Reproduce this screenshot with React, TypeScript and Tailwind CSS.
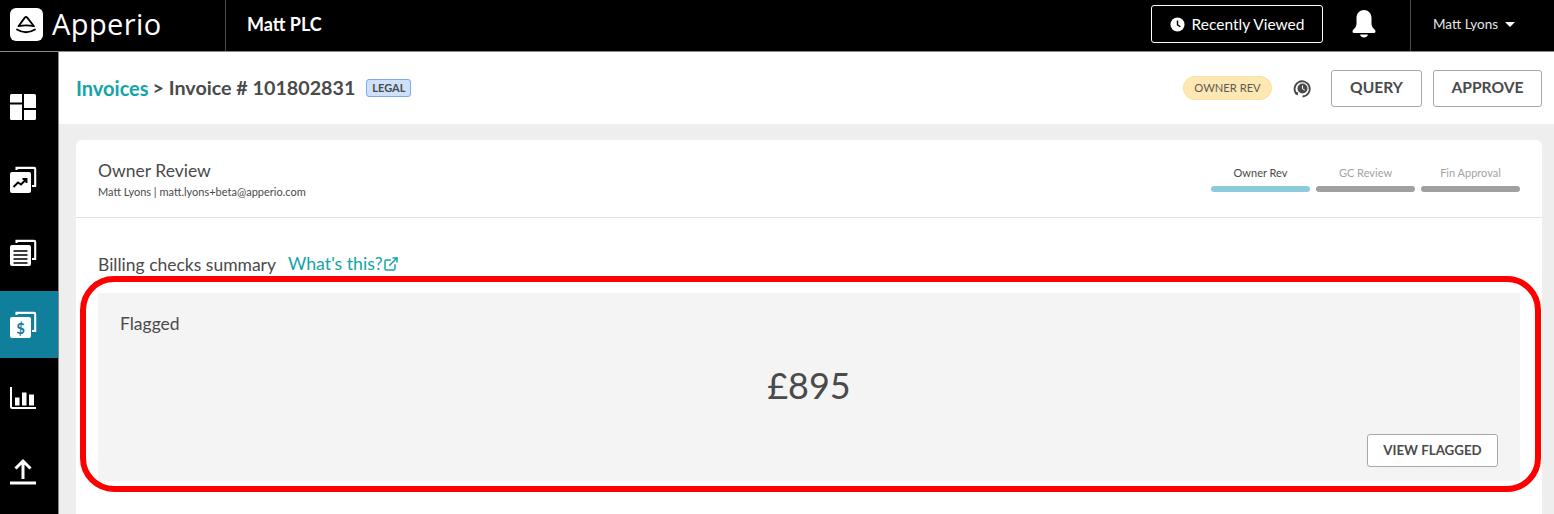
import {ExternalLink} from "lucide-react";

function AppLogo() {
    return (
        <div className="w-[33px] h-[33px] rounded-[6px] bg-white flex items-center justify-center">
            <svg width="33" height="33" viewBox="0 0 33 33" fill="none" stroke="#000" strokeWidth="1.8" strokeLinecap="round" strokeLinejoin="round">
                <path d="M8.5 18.2L14.8 9.6Q16 8.4 17.2 9.6L24 18.2Q16 16.4 8.5 18.2Z"/>
                <path d="M7 21.5Q16 27 25 21.5"/>
            </svg>
        </div>
    );
}

function ClockIcon({className}: { className?: string }) {
    return (
        <svg className={className} viewBox="0 0 16 16">
            <circle cx="8" cy="8" r="7.5" fill="currentColor"/>
            <path d="M8 3.8V8.3L11 10.4" fill="none" stroke="#000" strokeWidth="1.5"/>
        </svg>
    );
}

function BellIcon() {
    return (
        <svg width="24" height="28" viewBox="0 0 24 28" fill="#fff">
            <path d="M12 0C8 0 4.5 3 4.5 8V14C4.5 17 2.5 18 1 20C0 21.5 0.5 23 2 23H22C23.5 23 24 21.5 23 20C21.5 18 19.5 17 19.5 14V8C19.5 3 16 0 12 0Z"/>
            <path d="M8 24.5H16C15.5 26.5 14 27.5 12 27.5C10 27.5 8.5 26.5 8 24.5Z"/>
        </svg>
    );
}

function DashboardIcon() {
    return (
        <svg width="28" height="28" viewBox="0 0 28 28" fill="#fff">
            <path d="M1 2.5Q1 1 2.5 1H13V9.5H1Z"/>
            <path d="M1 11.5H13V27H2.5Q1 27 1 25.5Z"/>
            <path d="M15 1H25.5Q27 1 27 2.5V15H15Z"/>
            <path d="M15 17H27V25.5Q27 27 25.5 27H15Z"/>
        </svg>
    );
}

function StackedIcon({children}: { children: React.ReactNode }) {
    return (
        <svg width="28" height="28" viewBox="0 0 28 28">
            <path d="M7.5 4V1.9H25Q26.2 1.9 26.2 3V20H23" fill="none" stroke="#fff" strokeWidth="2.1"/>
            <rect x="1" y="6" width="21" height="21" rx="2" fill="#fff"/>
            {children}
        </svg>
    );
}

function ChartIcon() {
    return (
        <svg width="28" height="24" viewBox="0 0 28 24" fill="#fff">
            <path d="M2 1V20.5Q2 22 3.5 22H27" fill="none" stroke="#fff" strokeWidth="2"/>
            <rect x="6" y="11.5" width="4.5" height="8"/>
            <rect x="13" y="6.5" width="4.5" height="13"/>
            <rect x="20" y="8.5" width="5" height="11"/>
        </svg>
    );
}

function HistoryIcon() {
    return (
        <svg width="19" height="19" viewBox="0 0 19 19" fill="none">
            <path d="M4 15.5A7.6 7.6 0 1 1 9.5 17.5" stroke="#4a4a4a" strokeWidth="1.8"/>
            <path d="M1.8 13.5L4.8 13L5 16.5Z" fill="#4a4a4a"/>
            <circle cx="9.5" cy="9.5" r="5" fill="#4a4a4a"/>
            <path d="M9.5 6.5V9.8L11.8 11" stroke="#fff" strokeWidth="1"/>
        </svg>
    );
}

function NavItem({children, className}: { children: React.ReactNode; className?: string }) {
    return (
        <div className={`h-[73px] flex items-center pl-[9px] ${className ?? ""}`}>
            {children}
        </div>
    );
}

function Step({label, active}: { label: string; active?: boolean }) {
    return (
        <div className="w-[99px] flex flex-col items-center">
            <span className={active ? "text-[11px] leading-[14px] text-[#4a4a4a]" : "text-[11px] leading-[14px] text-[#a3a3a3]"}>{label}</span>
            <div className={active ? "mt-[6px] w-full h-[6px] rounded-full bg-[#8ccbda]" : "mt-[6px] w-full h-[6px] rounded-full bg-[#a0a0a0]"}/>
        </div>
    );
}

export default function App() {
    return (
        <div className="relative w-[1554px] h-[514px] overflow-hidden bg-black font-['Lato','Open_Sans',sans-serif] text-[#4a4a4a]">
            <header className="h-[52px] flex border-b border-[#8a8a8a] bg-black text-white">
                <div className="w-[226px] flex items-center pl-[10px] pb-[3px] gap-[9px] border-r border-[#4a4a4a]">
                    <AppLogo/>
                    <span className="text-[29px] leading-none font-normal tracking-[0.4px] font-['Open_Sans',sans-serif] pb-[2px]">Apperio</span>
                </div>
                <div className="flex-1 flex items-center pl-[21px] pb-[3px] text-[18px] font-bold">Matt PLC</div>
                <div className="h-[38px] w-[172px] mt-[5px] pt-[1px] flex items-center justify-center gap-[7px] border border-white rounded-[3px] text-[15.5px] mr-[27px]">
                    <ClockIcon className="w-[15px] h-[15px] text-white"/>
                    <span>Recently Viewed</span>
                </div>
                <div className="w-[60px] flex items-center pl-[2px] pb-[3px]">
                    <BellIcon/>
                </div>
                <div className="w-[144px] flex items-center pl-[22px] pb-[2px] gap-[7px] border-l border-[#4a4a4a] text-[13.5px] text-[#e6e6e6]">
                    <span>Matt Lyons</span>
                    <span className="w-0 h-0 border-x-[5px] border-x-transparent border-t-[5px] border-t-white"/>
                </div>
            </header>
            <div className="flex h-[462px]">
                <nav className="w-[59px] shrink-0 border-r border-[#8a8a8a] pt-[18px] flex flex-col">
                    <NavItem><DashboardIcon/></NavItem>
                    <NavItem>
                        <StackedIcon>
                            <path d="M4.5 21L9 16.5L12 18.5L17 13.5M13.5 13H17.5V17" fill="none" stroke="#000" strokeWidth="1.9"/>
                        </StackedIcon>
                    </NavItem>
                    <NavItem>
                        <StackedIcon>
                            <path d="M4.5 12H18.5M4.5 16H18.5M4.5 20H18.5M4.5 24H18.5" stroke="#000" strokeWidth="1.7"/>
                        </StackedIcon>
                    </NavItem>
                    <NavItem className="!h-[67px] mt-[2px] bg-[#0f7f9b]">
                        <StackedIcon>
                            <text x="11.5" y="23" textAnchor="middle" fontSize="15" fontWeight="700" fill="#0f7f9b" fontFamily="Lato">$</text>
                        </StackedIcon>
                    </NavItem>
                    <NavItem className="mt-[3px]"><ChartIcon/></NavItem>
                    <NavItem>
                        <svg width="28" height="28" viewBox="0 0 28 28" fill="none" stroke="#fff">
                            <path d="M14 22V4.5M6.5 11.5L14 4L21.5 11.5" strokeWidth="3"/>
                            <path d="M1 26H27" strokeWidth="3"/>
                        </svg>
                    </NavItem>
                </nav>
                <main className="flex-1 bg-[#eeeeee] flex flex-col">
                    <div className="h-[72px] shrink-0 bg-white flex items-center pl-[17px] pr-[12px]">
                        <div className="flex-1 flex items-center text-[20px] font-bold">
                            <span className="text-[#12a5a5]">Invoices</span>
                            <span className="ml-[4px] text-[19.7px]">&gt; Invoice # 101802831</span>
                            <span className="ml-[11px] h-[18px] w-[45px] flex items-center justify-center rounded-[3px] border border-[#7fa9ee] bg-[#cfe0fb] text-[11px] font-bold text-[#4a4a4a]">LEGAL</span>
                        </div>
                        <span className="h-[24px] w-[89px] flex items-center justify-center rounded-full border border-[#fbe0a0] bg-[#fde8b3] text-[11.2px] text-[#5e5a4e]">OWNER REV</span>
                        <span className="ml-[21px] mr-[19px] flex"><HistoryIcon/></span>
                        <button className="h-[37px] w-[91px] rounded-[3px] border border-[#a8a8a8] bg-white text-[15.6px] font-bold text-[#4a4a4a]">QUERY</button>
                        <button className="ml-[11px] h-[37px] w-[109px] rounded-[3px] border border-[#a8a8a8] bg-white text-[15.6px] font-bold text-[#4a4a4a]">APPROVE</button>
                    </div>
                    <section className="mt-[16px] ml-[17px] mr-[12px] flex-1 bg-white rounded-t-[6px]">
                        <div className="h-[78px] flex items-center pl-[22px] pr-[22px] border-b border-[#e2e2e2]">
                            <div className="flex-1 pt-[1px]">
                                <div className="text-[17.5px] leading-[22px]">Owner Review</div>
                                <div className="text-[11px] leading-[14px] mt-[3px]">Matt Lyons | matt.lyons+beta@apperio.com</div>
                            </div>
                            <div className="flex gap-[6px] pt-[1px]">
                                <Step label="Owner Rev" active/>
                                <Step label="GC Review"/>
                                <Step label="Fin Approval"/>
                            </div>
                        </div>
                        <div className="px-[22px]">
                            <div className="mt-[35px] h-[24px] flex items-center text-[17.5px]">
                                <span>Billing checks summary</span>
                                <span className="ml-[12px] pb-[2px] text-[17.7px] text-[#12a5a5]">What's this?</span>
                                <ExternalLink size={16} className="mb-[2px] text-[#12a5a5]" strokeWidth={2.2}/>
                            </div>
                            <div className="mt-[16px] h-[188px] bg-[#f4f4f4] flex flex-col px-[22px] pt-[20px] pb-[14px]">
                                <div className="text-[17.5px] leading-[22px]">Flagged</div>
                                <div className="mt-[28px] text-center text-[36px] leading-[44px]">£895</div>
                                <div className="mt-auto flex justify-end">
                                    <button className="h-[33px] w-[131px] rounded-[3px] border border-[#a8a8a8] bg-white text-[13.3px] font-bold text-[#4a4a4a]">VIEW FLAGGED</button>
                                </div>
                            </div>
                        </div>
                    </section>
                </main>
            </div>
            <div className="absolute left-[80px] top-[276px] w-[1461px] h-[216px] border-[6px] border-[#ff0000] rounded-[34px] pointer-events-none"/>
        </div>
    );
}
